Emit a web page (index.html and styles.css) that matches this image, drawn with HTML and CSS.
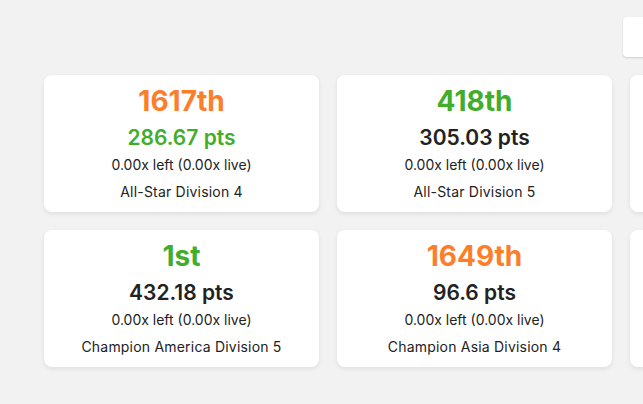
FILE: index.html
```html
<!DOCTYPE html>
<html>
<head>
<meta charset="utf-8">
<link rel="stylesheet" href="styles.css">
</head>
<body>
<div class="page">
  <div class="toolbar"><div class="tool-box"></div></div>
  <div class="grid">
    <div class="card">
      <div class="rank orange">1617th</div>
      <div class="pts green">286.67 pts</div>
      <div class="left">0.00x left (0.00x live)</div>
      <div class="div">All-Star Division 4</div>
    </div>
    <div class="card">
      <div class="rank green">418th</div>
      <div class="pts">305.03 pts</div>
      <div class="left">0.00x left (0.00x live)</div>
      <div class="div">All-Star Division 5</div>
    </div>
    <div class="card"></div>
    <div class="card">
      <div class="rank green">1st</div>
      <div class="pts">432.18 pts</div>
      <div class="left">0.00x left (0.00x live)</div>
      <div class="div">Champion America Division 5</div>
    </div>
    <div class="card">
      <div class="rank orange">1649th</div>
      <div class="pts">96.6 pts</div>
      <div class="left">0.00x left (0.00x live)</div>
      <div class="div">Champion Asia Division 4</div>
    </div>
    <div class="card"></div>
  </div>
</div>
</body>
</html>
```

FILE: styles.css
```css
html, body {
  margin: 0;
  padding: 0;
  background: #f2f2f2;
  font-family: Inter, "Noto Sans", sans-serif;
  color: #222;
}
.page {
  width: 643px;
  height: 404px;
  overflow: hidden;
}
.toolbar {
  display: flex;
  justify-content: flex-end;
  padding-top: 17px;
  height: 40px;
}
.tool-box {
  width: 40px;
  height: 40px;
  margin-right: -20px;
  background: #fff;
  border-radius: 4px;
  box-shadow: 0 1px 2px rgba(0,0,0,0.15);
}
.grid {
  display: grid;
  grid-template-columns: 275px 275px 275px;
  gap: 18px;
  padding-left: 44px;
  margin-top: 18px;
}
.card {
  background: #fff;
  border-radius: 8px;
  box-shadow: 0 2px 5px rgba(0,0,0,0.08);
  height: 137px;
  box-sizing: border-box;
  padding-top: 10px;
  text-align: center;
}
.rank {
  font-size: 28px;
  font-weight: 700;
  line-height: 32px;
}
.pts {
  font-size: 21px;
  font-weight: 600;
  line-height: 26px;
  margin-top: 8px;
}
.left {
  font-size: 14px;
  line-height: 18px;
  margin-top: 5px;
}
.div {
  font-size: 14px;
  line-height: 18px;
  margin-top: 9px;
  letter-spacing: 0.2px;
}
.orange { color: #fd7e2a; }
.green { color: #42ad2b; }
```
